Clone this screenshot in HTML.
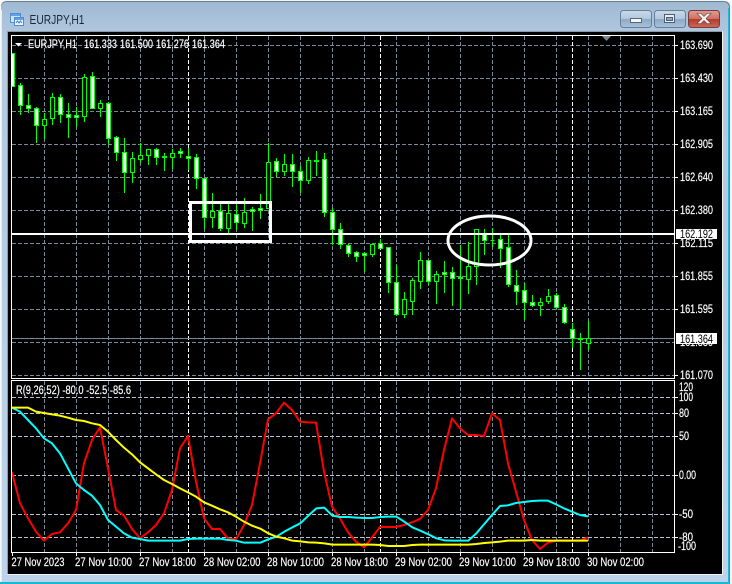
<!DOCTYPE html>
<html><head><meta charset="utf-8"><style>
html,body{margin:0;padding:0;background:#fff;width:732px;height:584px;overflow:hidden}
svg{display:block}
text{font-family:"Liberation Sans",sans-serif;font-size:11.5px;fill:#fff;stroke:#fff;stroke-width:.18}
</style></head><body>
<svg width="732" height="584" viewBox="0 0 732 584" xmlns="http://www.w3.org/2000/svg">
<defs>
<linearGradient id="tb" x1="0" y1="0" x2="0" y2="1"><stop offset="0" stop-color="#a0b9d2"/><stop offset="0.06" stop-color="#b2c9e0"/><stop offset="1" stop-color="#bcd3ea"/></linearGradient>
<linearGradient id="btn" x1="0" y1="0" x2="0" y2="1"><stop offset="0" stop-color="#c9d9e9"/><stop offset="0.48" stop-color="#b3c8dd"/><stop offset="0.52" stop-color="#8da9c5"/><stop offset="1" stop-color="#a9c3db"/></linearGradient>
<linearGradient id="cls" x1="0" y1="0" x2="0" y2="1"><stop offset="0" stop-color="#dd9f93"/><stop offset="0.48" stop-color="#cf7263"/><stop offset="0.52" stop-color="#b53a2c"/><stop offset="1" stop-color="#cb6a58"/></linearGradient>
<clipPath id="mp"><rect x="12" y="36" width="663" height="342"/></clipPath>
<clipPath id="ip"><rect x="12" y="381" width="663" height="172"/></clipPath>
</defs>

<!-- window -->
<path d="M0 584V6Q0 0 6 0H726Q732 0 732 6V584Z" fill="#f4f7fa"/>
<path d="M1 584V7Q1 1 7 1H723Q730 1 730 7V584Z" fill="#66808f"/>
<path d="M1 582V8Q1 2 7 2H723Q729 2 729 8V582Z" fill="url(#tb)"/>
<rect x="0" y="582" width="730" height="2" fill="#14b8d8"/>
<rect x="728" y="8" width="1" height="575" fill="#2ab6d6"/>
<rect x="1" y="10" width="1" height="572" fill="#e4edf6"/>

<!-- title icon -->
<rect x="10.500" y="13.500" width="10" height="9" fill="#cfe2f7" stroke="#4f8fd0"/>
<rect x="11" y="14" width="9" height="2" fill="#5da3e6"/>
<rect x="14.500" y="17.500" width="9" height="8" fill="#eef5fd" stroke="#4f8fd0"/>
<rect x="15" y="18" width="8" height="2" fill="#5da3e6"/>
<path d="M16 23l1.500-2 1.500 2 1.500-2 1.500 2" fill="none" stroke="#3f7fc0" stroke-width="1"/>
<text x="29.500" y="24" textLength="55" lengthAdjust="spacingAndGlyphs" style="font-size:13px;fill:#1a2a3c;stroke:none">EURJPY,H1</text>

<!-- buttons -->
<rect x="620.500" y="10.500" width="31" height="17" rx="3" fill="url(#btn)" stroke="#66809c"/>
<rect x="630.500" y="18.500" width="11" height="4" fill="#f4f6f8" stroke="#56677a"/>
<rect x="654.500" y="10.500" width="31" height="17" rx="3" fill="url(#btn)" stroke="#66809c"/>
<rect x="664.500" y="14.500" width="10" height="8" fill="#e8eef4" stroke="#4d5e72"/>
<rect x="666.500" y="17.500" width="6" height="3" fill="#8fa6bd" stroke="#4d5e72" stroke-width="1"/>
<rect x="688.500" y="10.500" width="31" height="17" rx="3" fill="url(#cls)" stroke="#7a3a36"/>
<path d="M697 13.500h4l3 3 3-3h4l-5 5 5 5h-4l-3-3-3 3h-4l5-5z" fill="#f8f4f2" stroke="#6a3a38" stroke-width=".6"/>

<!-- client -->
<rect x="7" y="31" width="716" height="544" fill="#eef3f8"/>
<rect x="7" y="31" width="1" height="543" fill="#8c9aa8"/>
<rect x="7" y="31" width="715" height="1" fill="#8c9aa8"/>
<rect x="8" y="32" width="714" height="542" fill="#000"/>

<!-- grid main -->
<g shape-rendering="crispEdges" fill="none">
<path stroke="#778899" stroke-dasharray="4 2" d="M12 45.500H675M12 78.500H675M12 111.500H675M12 144.500H675M12 177.500H675M12 210.500H675M12 243.500H675M12 276.500H675M12 309.500H675M12 342.500H675M12 375.500H675"/>
<path stroke="#778899" stroke-dasharray="4 2" d="M44.500 36V378M76.500 36V378M108.500 36V378M140.500 36V378M172.500 36V378M204.500 36V378M236.500 36V378M268.500 36V378M300.500 36V378M332.500 36V378M364.500 36V378M396.500 36V378M428.500 36V378M460.500 36V378M492.500 36V378M524.500 36V378M556.500 36V378M588.500 36V378M620.500 36V378M652.500 36V378"/>
<path stroke="#fff" stroke-dasharray="4 2" d="M188.500 36V378M380.500 36V378M572.500 36V378"/>
<!-- grid indicator -->
<path stroke="#778899" stroke-dasharray="4 2" d="M44.500 381V553M76.500 381V553M108.500 381V553M140.500 381V553M172.500 381V553M204.500 381V553M236.500 381V553M268.500 381V553M300.500 381V553M332.500 381V553M364.500 381V553M396.500 381V553M428.500 381V553M460.500 381V553M492.500 381V553M524.500 381V553M556.500 381V553M588.500 381V553M620.500 381V553M652.500 381V553"/>
<path stroke="#b8c2cc" stroke-dasharray="4 2" d="M12 397.500H675M12 413.500H675M12 436.500H675M12 475.500H675M12 514.500H675M12 537.500H675"/>
<path stroke="#fff" stroke-dasharray="4 2" d="M188.500 381V553M380.500 381V553M572.500 381V553"/>

<!-- current price -->
<path stroke="#778899" d="M12 338.500H675"/>

<g clip-path="url(#mp)">
<!-- wicks -->
<path stroke="#00ff00" d="M20.500 83V115M28.500 94V113M36.500 107V143M44.500 113V139M52.500 93V125M60.500 94V123M68.500 103V138M76.500 107V127M84.500 74V122M92.500 72V108M100.500 100V117M108.500 102V145M116.500 136V161M124.500 138V193M132.500 152V183M140.500 143V163M148.500 149V165M156.500 148V165M164.500 153V171M172.500 149V169M180.500 148V158M188.500 148V170M196.500 154V189M204.500 178V229M212.500 193V228M220.500 204V231M228.500 204V233M236.500 205V230M244.500 198V228M252.500 207V231M260.500 194V219M268.500 143V209M276.500 158V177M284.500 154V176M292.500 154V187M300.500 166V193M308.500 157V184M316.500 151V176M324.500 153V217M332.500 208V245M340.500 223V249M348.500 244V257M356.500 251V262M364.500 252V272M372.500 243V257M380.500 239V248M388.500 247V293M396.500 265V316M404.500 292V318M412.500 278V315M420.500 252V289M428.500 260V285M436.500 271V304M444.500 261V293M452.500 267V306M460.500 245V309M468.500 242V294M476.500 230V285M484.500 229V255M492.500 228V247M500.500 235V268M508.500 235V287M516.500 270V305M524.500 283V320M532.500 295V307M540.500 298V316M548.500 289V304M556.500 293V309M564.500 304V324M572.500 323V348M580.500 333V370M588.500 321V350"/>
<!-- white bodies -->
<path stroke="#00ff00" fill="#fff" d="M10.500 53.500h4V86.500h-4zM18.500 85.500h4V105.500h-4zM26.500 105.500h4V108.500h-4zM34.500 108.500h4V125.500h-4zM58.500 97.500h4V114.500h-4zM66.500 114.500h4V117.500h-4zM74.500 115.500h4V117.500h-4zM90.500 76.500h4V108.500h-4zM106.500 103.500h4V138.500h-4zM114.500 137.500h4V152.500h-4zM122.500 152.500h4V172.500h-4zM154.500 149.500h4V157.500h-4zM162.500 156.500h4V157.500h-4zM178.500 151.500h4V153.500h-4zM186.500 156.500h4V158.500h-4zM194.500 157.500h4V178.500h-4zM202.500 178.500h4V217.500h-4zM218.500 211.500h4V228.500h-4zM234.500 214.500h4V222.500h-4zM250.500 209.500h4V211.500h-4zM258.500 208.500h4V210.500h-4zM274.500 161.500h4V171.500h-4zM290.500 164.500h4V171.500h-4zM298.500 171.500h4V180.500h-4zM314.500 160.500h4V161.500h-4zM322.500 159.500h4V212.500h-4zM330.500 212.500h4V229.500h-4zM338.500 229.500h4V244.500h-4zM346.500 245.500h4V253.500h-4zM354.500 252.500h4V256.500h-4zM362.500 253.500h4V255.500h-4zM378.500 243.500h4V248.500h-4zM386.500 247.500h4V282.500h-4zM394.500 282.500h4V314.500h-4zM426.500 260.500h4V281.500h-4zM442.500 272.500h4V274.500h-4zM450.500 272.500h4V278.500h-4zM458.500 277.500h4V278.500h-4zM482.500 233.500h4V240.500h-4zM490.500 240.500h4V240.500h-4zM498.500 239.500h4V248.500h-4zM506.500 247.500h4V284.500h-4zM514.500 285.500h4V291.500h-4zM522.500 290.500h4V302.500h-4zM530.500 302.500h4V305.500h-4zM554.500 295.500h4V307.500h-4zM562.500 307.500h4V322.500h-4zM570.500 329.500h4V338.500h-4zM578.500 338.500h4V339.500h-4z"/>
<!-- black bodies -->
<path stroke="#00ff00" fill="#000" d="M42.500 119.500h4V125.500h-4zM50.500 97.500h4V118.500h-4zM82.500 77.500h4V116.500h-4zM98.500 103.500h4V108.500h-4zM130.500 158.500h4V172.500h-4zM138.500 155.500h4V159.500h-4zM146.500 149.500h4V155.500h-4zM170.500 153.500h4V157.500h-4zM210.500 211.500h4V217.500h-4zM226.500 213.500h4V228.500h-4zM242.500 212.500h4V223.500h-4zM266.500 162.500h4V208.500h-4zM282.500 164.500h4V171.500h-4zM306.500 160.500h4V180.500h-4zM370.500 244.500h4V254.500h-4zM402.500 299.500h4V314.500h-4zM410.500 280.500h4V301.500h-4zM418.500 260.500h4V281.500h-4zM434.500 274.500h4V281.500h-4zM466.500 266.500h4V279.500h-4zM474.500 229.500h4V266.500h-4zM538.500 302.500h4V305.500h-4zM546.500 296.500h4V301.500h-4zM586.500 338.500h4V343.500h-4z"/>
</g>
</g>

<!-- annotations -->
<rect x="12" y="233" width="663" height="2" fill="#fff"/>
<rect x="190.500" y="202.500" width="80" height="39" fill="none" stroke="#fff" stroke-width="3" shape-rendering="crispEdges"/>
<ellipse cx="489.500" cy="240.500" rx="41.500" ry="24.500" fill="none" stroke="#fff" stroke-width="3"/>

<!-- indicator lines -->
<g clip-path="url(#ip)"><g transform="translate(0,375) scale(.33333)" fill="none" stroke-width="6" stroke-linejoin="round">
<polyline stroke="#ff0000" points="36,292 60,385 84,430 108,470 132,497 156,477 180,472 204,445 228,405 252,265 276,195 300,157 324,280 348,405 372,422 396,462 420,490 444,472 468,450 492,415 516,345 540,220 564,183 588,320 612,430 636,462 660,462 684,490 708,493 732,450 756,390 780,265 804,133 828,115 852,83 876,105 900,140 924,142 948,143 972,290 996,395 1020,430 1044,472 1068,500 1092,517 1116,487 1140,456 1164,456 1188,456 1212,450 1236,442 1260,432 1284,405 1308,340 1332,225 1356,130 1380,160 1404,180 1428,180 1452,183 1476,115 1500,135 1524,265 1548,350 1572,435 1596,495 1620,522 1644,503 1668,497 1692,497 1716,497 1740,497 1764,487"/>
<polyline stroke="#00ffff" points="36,98 60,110 84,135 108,160 132,190 156,205 180,235 204,280 228,325 252,345 276,362 300,390 324,435 348,455 372,475 396,488 420,492 444,497 468,497 492,497 516,497 540,497 564,492 588,491 612,491 636,491 660,491 684,495 708,497 732,503 756,503 781,503 805,493 829,485 853,470 877,457 901,445 925,422 949,400 973,398 997,422 1021,426 1045,426 1069,428 1093,429 1117,429 1141,426 1165,425 1189,425 1213,440 1237,457 1261,467 1285,478 1309,490 1333,496 1357,497 1381,497 1405,497 1429,475 1453,447 1476,420 1500,393 1524,391 1548,384 1572,381 1596,378 1620,377 1644,377 1668,388 1692,400 1716,410 1740,420 1764,424"/>
<polyline stroke="#ffff00" points="36,98 60,98 84,98 108,110 132,114 156,118 180,122 204,128 228,135 252,138 276,145 300,150 324,170 348,195 372,218 396,238 420,262 444,280 468,298 492,315 516,327 540,340 564,352 588,365 612,382 636,392 660,403 684,412 708,425 732,440 756,452 781,461 805,475 829,485 853,490 877,497 901,499 925,502 949,503 973,505 997,509 1021,509 1045,509 1069,509 1093,509 1117,509 1141,510 1165,513 1189,513 1213,513 1237,510 1261,509 1285,509 1309,509 1333,509 1357,509 1381,509 1405,509 1429,507 1453,504 1476,502 1500,500 1524,497 1548,497 1572,497 1596,495 1620,497 1644,497 1668,497 1692,497 1716,497 1740,497 1764,497"/>
</g></g>

<!-- frames -->
<g fill="none" stroke="#fff" shape-rendering="crispEdges">
<rect x="11.500" y="35.500" width="663" height="343"/>
<rect x="11.500" y="380.500" width="663" height="172"/>
<path d="M675 45.500h3M675 78.500h3M675 111.500h3M675 144.500h3M675 177.500h3M675 210.500h3M675 243.500h3M675 276.500h3M675 309.500h3M675 375.500h3M675 397.500h3M675 413.500h3M675 436.500h3M675 475.500h3M675 514.500h3M675 537.500h3"/>
<path d="M12.500 553v3M76.500 553v3M140.500 553v3M204.500 553v3M268.500 553v3M332.500 553v3M396.500 553v3M460.500 553v3M524.500 553v3M588.500 553v3"/>
</g>
<path d="M602 36h9l-4.500 5z" fill="#778899"/>
<path d="M15 43h7l-3.500 3.500z" fill="#fff"/>

<!-- chart text -->
<text x="28" y="48" textLength="49" lengthAdjust="spacingAndGlyphs">EURJPY,H1</text>
<text x="84" y="48" textLength="33" lengthAdjust="spacingAndGlyphs">161.333</text>
<text x="120" y="48" textLength="33" lengthAdjust="spacingAndGlyphs">161.500</text>
<text x="156" y="48" textLength="33" lengthAdjust="spacingAndGlyphs">161.276</text>
<text x="192" y="48" textLength="33" lengthAdjust="spacingAndGlyphs">161.364</text>
<text x="16" y="394" textLength="115" lengthAdjust="spacingAndGlyphs">R(9,26,52) -80.0 -52.5 -85.6</text>

<!-- price axis -->
<g>
<text x="680" y="49" textLength="33" lengthAdjust="spacingAndGlyphs">163.690</text>
<text x="680" y="82" textLength="33" lengthAdjust="spacingAndGlyphs">163.430</text>
<text x="680" y="115" textLength="33" lengthAdjust="spacingAndGlyphs">163.165</text>
<text x="680" y="148" textLength="33" lengthAdjust="spacingAndGlyphs">162.905</text>
<text x="680" y="181" textLength="33" lengthAdjust="spacingAndGlyphs">162.640</text>
<text x="680" y="214" textLength="33" lengthAdjust="spacingAndGlyphs">162.380</text>
<text x="680" y="247" textLength="33" lengthAdjust="spacingAndGlyphs">162.115</text>
<text x="680" y="280" textLength="33" lengthAdjust="spacingAndGlyphs">161.855</text>
<text x="680" y="313" textLength="33" lengthAdjust="spacingAndGlyphs">161.595</text>
<text x="680" y="346" textLength="33" lengthAdjust="spacingAndGlyphs">161.330</text>
<text x="680" y="379" textLength="33" lengthAdjust="spacingAndGlyphs">161.070</text>
</g>
<rect x="676" y="229" width="41" height="10" fill="#fff"/>
<text x="680" y="238" textLength="33" lengthAdjust="spacingAndGlyphs" style="fill:#000;stroke:none">162.192</text>
<rect x="676" y="333" width="41" height="11" fill="#fff"/>
<text x="680" y="343" textLength="33" lengthAdjust="spacingAndGlyphs" style="fill:#000;stroke:none">161.364</text>

<!-- indicator axis -->
<text x="679" y="391" textLength="14" lengthAdjust="spacingAndGlyphs">120</text>
<text x="679" y="401" textLength="14" lengthAdjust="spacingAndGlyphs">100</text>
<text x="679" y="417" textLength="10" lengthAdjust="spacingAndGlyphs">80</text>
<text x="679" y="440" textLength="10" lengthAdjust="spacingAndGlyphs">50</text>
<text x="679" y="479" textLength="17" lengthAdjust="spacingAndGlyphs">0.00</text>
<text x="679" y="518" textLength="14" lengthAdjust="spacingAndGlyphs">-50</text>
<text x="679" y="541" textLength="14" lengthAdjust="spacingAndGlyphs">-80</text>
<text x="678" y="550" textLength="18" lengthAdjust="spacingAndGlyphs">-100</text>

<!-- time axis -->
<text x="11.500" y="566" textLength="53" lengthAdjust="spacingAndGlyphs">27 Nov 2023</text>
<text x="75" y="566" textLength="57" lengthAdjust="spacingAndGlyphs">27 Nov 10:00</text>
<text x="139" y="566" textLength="57" lengthAdjust="spacingAndGlyphs">27 Nov 18:00</text>
<text x="203.500" y="566" textLength="57" lengthAdjust="spacingAndGlyphs">28 Nov 02:00</text>
<text x="267" y="566" textLength="57" lengthAdjust="spacingAndGlyphs">28 Nov 10:00</text>
<text x="331" y="566" textLength="57" lengthAdjust="spacingAndGlyphs">28 Nov 18:00</text>
<text x="395" y="566" textLength="57" lengthAdjust="spacingAndGlyphs">29 Nov 02:00</text>
<text x="459" y="566" textLength="57" lengthAdjust="spacingAndGlyphs">29 Nov 10:00</text>
<text x="523" y="566" textLength="57" lengthAdjust="spacingAndGlyphs">29 Nov 18:00</text>
<text x="587" y="566" textLength="57" lengthAdjust="spacingAndGlyphs">30 Nov 02:00</text>
</svg>
</body></html>
